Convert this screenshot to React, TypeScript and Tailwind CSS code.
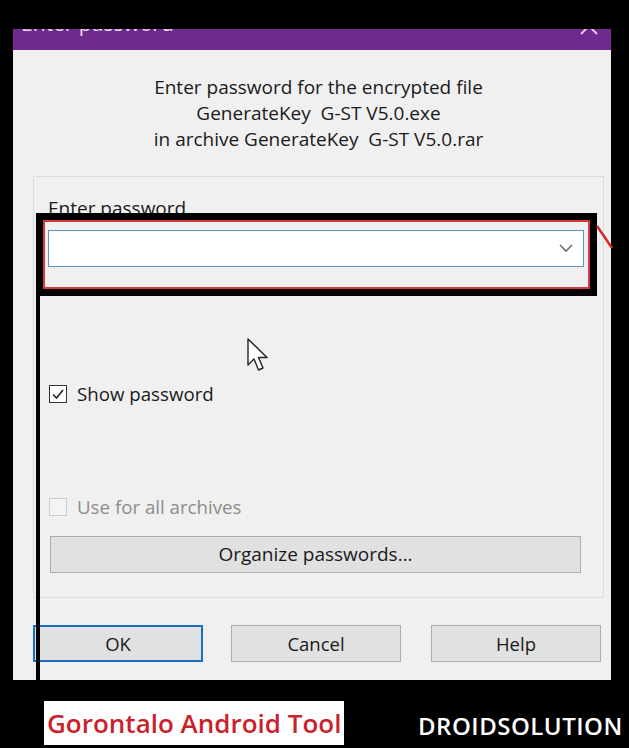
import React from 'react';

const Checkbox: React.FC<{ checked?: boolean; disabled?: boolean }> = ({ checked, disabled }) => (
  <div
    className={
      disabled
        ? 'w-[18px] h-[18px] border border-[#cccccc] bg-[#f4f4f4]'
        : 'w-[18px] h-[18px] border border-[#333333] bg-white flex items-center justify-center'
    }
  >
    {checked && (
      <svg width="14" height="14" viewBox="0 0 14 14" fill="none">
        <path d="M2 7.5 L5.5 11 L12 3" stroke="#222" strokeWidth="1.6" />
      </svg>
    )}
  </div>
);

const DialogButton: React.FC<{ label: string; primary?: boolean }> = ({ label, primary }) => (
  <div
    className={
      primary
        ? 'w-[170px] h-[37px] border-2 border-[#1a6fc2] bg-[#e1e1e1] flex items-center justify-center'
        : 'w-[170px] h-[37px] border border-[#adadad] bg-[#e1e1e1] flex items-center justify-center'
    }
  >
    <span className="text-[18.5px] text-[#1a1a1a]">{label}</span>
  </div>
);

export default function App() {
  return (
    <div
      className="w-[629px] h-[748px] bg-black relative overflow-hidden flex flex-col"
      style={{ fontFamily: '"Open Sans", "Noto Sans", sans-serif' }}
    >
      {/* dialog */}
      <div className="pt-[29px] pl-[13px] w-[611px]">
        <div className="h-[21px] bg-[#6f2a8e] relative overflow-hidden">
          <span className="absolute left-[8px] -top-[19px] text-[21px] leading-[26px] whitespace-nowrap text-[#ecd6f2]">
            Enter password
          </span>
          <svg className="absolute left-[566px] -top-[13px]" width="20" height="20" viewBox="0 0 20 20">
            <path d="M2 2 L18 18 M18 2 L2 18" stroke="#e7c9f0" strokeWidth="2" />
          </svg>
        </div>

        <div className="h-[630px] bg-[#f0f0f0] flex flex-col pl-[20px] pr-[7px]">
          <div className="pt-[24px] text-center text-[19px] leading-[26px] text-[#1a1a1a] whitespace-nowrap">
            <div>Enter password for the encrypted file</div>
            <div>GenerateKey&nbsp; G-ST V5.0.exe</div>
            <div>in archive GenerateKey&nbsp; G-ST V5.0.rar</div>
          </div>

          {/* group box */}
          <div className="mt-[24px] h-[422px] border border-[#dcdcdc] flex flex-col pl-[14px] pr-[18px]">
            <div className="mt-[21px] h-[20px] leading-[20px] text-[19px] text-[#1a1a1a]">
              Enter password
            </div>
            <div className="mt-[12px] h-[37px] w-[536px] bg-white border border-[#5a93c9] flex items-center justify-end pr-[10px]">
              <svg width="14" height="9" viewBox="0 0 14 9" fill="none">
                <path d="M1 1 L7 7 L13 1" stroke="#707070" strokeWidth="1.6" />
              </svg>
            </div>

            <div className="mt-[117px] h-[20px] flex items-center gap-[10px] pl-[1px]">
              <Checkbox checked />
              <span className="text-[18.7px] text-[#1a1a1a]">Show password</span>
            </div>

            <div className="mt-[93px] h-[20px] flex items-center gap-[10px] pl-[1px]">
              <Checkbox disabled />
              <span className="text-[18.7px] text-[#8c8c8c]">Use for all archives</span>
            </div>

            <div className="mt-[19px] ml-[2px] h-[37px] w-[531px] border border-[#adadad] bg-[#e1e1e1] flex items-center justify-center">
              <span className="text-[19px] text-[#1a1a1a]">Organize passwords...</span>
            </div>
          </div>

          <div className="mt-[27px] flex items-center">
            <DialogButton label="OK" primary />
            <div className="ml-[28px]">
              <DialogButton label="Cancel" />
            </div>
            <div className="ml-[30px]">
              <DialogButton label="Help" />
            </div>
          </div>
        </div>
      </div>

      {/* footer captions */}
      <div className="mt-[21px] flex items-center pl-[44px]">
        <div className="w-[300px] h-[44px] bg-white flex items-center pl-[3px] overflow-hidden">
          <span className="text-[26px] leading-[32px] font-semibold text-[#cc1f2d] whitespace-nowrap">
            Gorontalo Android Tool
          </span>
        </div>
        <span className="ml-[74px] mt-[5px] text-[24px] font-semibold text-white tracking-[0.5px] whitespace-nowrap">
          DROIDSOLUTION
        </span>
      </div>

      {/* annotation overlays */}
      <div className="absolute left-[36px] top-[213px] w-[561px] h-[83px] border-[7px] border-black">
        <div className="w-full h-full border-2 border-[#d23c3c]" />
      </div>
      <div className="absolute left-[36px] top-[296px] w-[4px] h-[400px] bg-black" />
      <svg className="absolute left-[596px] top-[224px]" width="20" height="26" viewBox="0 0 20 26">
        <path d="M1 2 L16 24" stroke="#d82a2a" strokeWidth="2.5" />
      </svg>

      {/* mouse cursor */}
      <svg className="absolute left-[246px] top-[337px]" width="26" height="36" viewBox="0 0 26 36">
        <path
          d="M2 2 L2 28 L8 22 L12.5 33 L17 31 L12.5 20.5 L21 20.5 Z"
          fill="white"
          stroke="#222"
          strokeWidth="1.4"
          strokeLinejoin="round"
        />
      </svg>
    </div>
  );
}
